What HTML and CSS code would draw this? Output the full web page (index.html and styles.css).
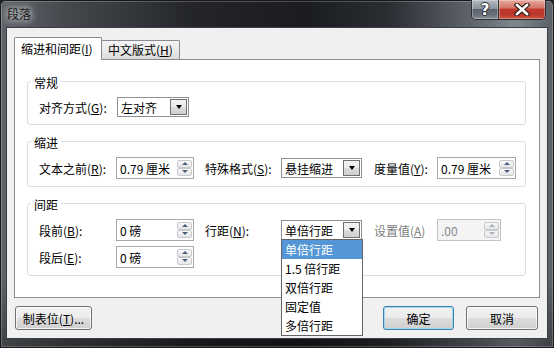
FILE: index.html
```html
<!DOCTYPE html>
<html lang="zh-CN">
<head>
    <meta charset="UTF-8">
    <title>段落</title>
    <link rel="stylesheet" href="styles.css">
</head>
<body>
    <div class="window">
        <div class="titlebar">
            <span class="title">段落</span>
            <div class="caption-btns">
                <div class="cap help">?</div>
                <div class="cap close">
                    <svg width="16" height="13" viewBox="0 0 16 13">
                        <path d="M3 2 L13 11 M13 2 L3 11" stroke="#3a2020" stroke-width="5" stroke-linecap="square"/>
                        <path d="M3 2 L13 11 M13 2 L3 11" stroke="#fff" stroke-width="2.6" stroke-linecap="square"/>
                    </svg>
                </div>
            </div>
        </div>

        <div class="client">
            <div class="tabs">
                <div class="tab active">缩进和间距(<u>I</u>)</div>
                <div class="tab">中文版式(<u>H</u>)</div>
            </div>

            <div class="panel">
                <fieldset class="group">
                    <legend>常规</legend>
                    <div class="row">
                        <span class="lbl">对齐方式(<u>G</u>):</span>
                        <div class="combo narrow"><span>左对齐</span><i class="drop"></i></div>
                    </div>
                </fieldset>

                <fieldset class="group">
                    <legend>缩进</legend>
                    <div class="row">
                        <span class="lbl">文本之前(<u>R</u>):</span>
                        <div class="spin"><span>0.79 厘米</span><div class="spinner"><i class="sb up"></i><i class="sb down"></i></div></div>
                        <span class="lbl mid">特殊格式(<u>S</u>):</span>
                        <div class="combo"><span>悬挂缩进</span><i class="drop"></i></div>
                        <span class="lbl last">度量值(<u>Y</u>):</span>
                        <div class="spin"><span>0.79 厘米</span><div class="spinner"><i class="sb up"></i><i class="sb down"></i></div></div>
                    </div>
                </fieldset>

                <fieldset class="group">
                    <legend>间距</legend>
                    <div class="row">
                        <span class="lbl">段前(<u>B</u>):</span>
                        <div class="spin"><span>0 磅</span><div class="spinner"><i class="sb up"></i><i class="sb down"></i></div></div>
                        <span class="lbl mid">行距(<u>N</u>):</span>
                        <div class="combo open"><span>单倍行距</span><i class="drop"></i>
                            <div class="list">
                                <div class="opt sel">单倍行距</div>
                                <div class="opt">1.5 倍行距</div>
                                <div class="opt">双倍行距</div>
                                <div class="opt">固定值</div>
                                <div class="opt">多倍行距</div>
                            </div>
                        </div>
                        <span class="lbl last disabled">设置值(<u>A</u>)</span>
                        <div class="spin off"><span>.00</span><div class="spinner"><i class="sb up"></i><i class="sb down"></i></div></div>

                        <span class="lbl">段后(<u>E</u>):</span>
                        <div class="spin"><span>0 磅</span><div class="spinner"><i class="sb up"></i><i class="sb down"></i></div></div>
                    </div>
                </fieldset>
            </div>

            <div class="footer">
                <button class="btn tabstops">制表位(<u>T</u>)...</button>
                <button class="btn ok">确定</button>
                <button class="btn cancel">取消</button>
            </div>
        </div>
    </div>
</body>
</html>
```

FILE: styles.css
```css
* {
    box-sizing: border-box;
}
body {
    margin: 0;
    font-family: "Noto Sans CJK SC", "Microsoft YaHei", sans-serif;
    font-size: 12px;
    color: #000;
    background: #1c1e22;
}
u {
    text-decoration: underline;
    text-underline-offset: 1px;
}

/* window frame */
.window {
    width: 554px;
    height: 348px;
    display: flex;
    flex-direction: column;
    padding: 0 7px 10px;
    border-radius: 6px 6px 0 0;
    background:
        linear-gradient(180deg, rgba(0,0,0,0) 0%, rgba(0,0,0,0) 80%, rgba(0,0,0,.35) 100%),
        linear-gradient(90deg, #60646a 0%, #45484d 12%, #232529 35%, #1a1c20 55%, #2a2d32 70%, #5f646b 85%, #80868e 93%, #5a5f66 100%);
    box-shadow: inset 0 0 0 1px #16181b, inset 0 0 0 2px rgba(255,255,255,.22);
}
.titlebar {
    height: 28px;
    display: flex;
    justify-content: space-between;
    align-items: flex-start;
}
.title {
    line-height: 28px;
    font-size: 12px;
    color: #1a1a1a;
    text-shadow: 0 0 6px rgba(255,255,255,.9), 0 0 10px rgba(255,255,255,.7);
}
.caption-btns {
    display: flex;
    margin-right: 1px;
    height: 20px;
    border: 1px solid #2c2f34;
    border-top: none;
    border-radius: 0 0 5px 5px;
    overflow: hidden;
}
.cap {
    height: 19px;
    display: flex;
    align-items: center;
    justify-content: center;
    box-shadow: inset 0 0 0 1px rgba(255,255,255,.3);
}
.help {
    width: 27px;
    font: bold 15px "DejaVu Sans", sans-serif;
    color: #fff;
    border-right: 1px solid #2c2f34;
    text-shadow: -1px 0 #2a2d33, 1px 0 #2a2d33, 0 -1px #2a2d33, 0 1px #2a2d33;
    background: linear-gradient(180deg, #b4bac2 0%, #8d949d 45%, #5c636c 50%, #6b727b 80%, #8a9098 100%);
}
.close {
    width: 46px;
    background: linear-gradient(180deg, #e8a89c 0%, #d2786a 40%, #c0392b 50%, #b8352a 75%, #d2563f 100%);
}

/* client area */
.client {
    flex: 1;
    background: #f0f0f0;
    padding: 9px 7px 8px;
    display: flex;
    flex-direction: column;
    box-shadow: 0 0 0 1px #3b3f45;
}
.tabs {
    display: flex;
    align-items: flex-end;
    height: 22px;
    position: relative;
    z-index: 1;
}
.tab {
    height: 19px;
    width: 79px;
    margin-left: -1px;
    padding-left: 6px;
    line-height: 18px;
    white-space: nowrap;
    border: 1px solid #898c95;
    border-bottom: none;
    border-radius: 2px 2px 0 0;
    background: linear-gradient(180deg, #f4f4f4 0%, #eaeaea 50%, #dadada 100%);
}
.tab.active {
    height: 23px;
    width: 88px;
    margin-left: 0;
    margin-bottom: -1px;
    line-height: 21px;
    background: #fff;
    position: relative;
    z-index: 2;
}
.panel {
    height: 239px;
    border: 1px solid #898c95;
    background: #fff;
    padding: 12px 13px 0 12px;
}

/* group boxes */
.group {
    margin: 0 0 7px;
    border: 1px solid #d5dfe5;
    border-radius: 3px;
    padding: 7px 10px 7px 11px;
    min-width: 0;
}
.group legend {
    padding: 4px 3px 0;
    margin-left: -8px;
    line-height: 14px;
}
.row {
    display: grid;
    grid-template-columns: 77px 78px 87px 81px 75px 79px;
    row-gap: 5px;
    align-items: center;
}
.lbl {
    white-space: nowrap;
}
.lbl.mid {
    padding-left: 11px;
}
.lbl.last {
    padding-left: 12px;
}
.lbl.disabled {
    color: #7c7c7c;
}

/* spin box */
.spin {
    height: 22px;
    display: flex;
    align-items: center;
    padding-left: 3px;
    border: 1px solid #a7a9ad;
    background: #fff;
    white-space: nowrap;
}
.spinner {
    margin-left: auto;
    margin-right: 1px;
    width: 15px;
    height: 16px;
    display: flex;
    flex-direction: column;
    gap: 0;
}
.sb {
    flex: 1;
    position: relative;
    border: 1px solid #c6cace;
    border-radius: 2px;
    background: linear-gradient(180deg, #f8f8f8 0%, #e6e6e6 100%);
}
.sb::after {
    content: "";
    position: absolute;
    left: 4px;
    top: 1px;
    border-left: 3px solid transparent;
    border-right: 3px solid transparent;
}
.sb.up::after {
    border-bottom: 3px solid #4a5e80;
}
.sb.down::after {
    border-top: 3px solid #4a5e80;
}
.spin.off {
    width: 64px;
    background: #f4f4f4;
    border-color: #c2c4c8;
    color: #8a8a8a;
}
.spin.off .sb::after {
    border-bottom-color: #a9b0bb;
    border-top-color: #a9b0bb;
}

/* combo box */
.combo {
    height: 20px;
    display: flex;
    align-items: center;
    padding-left: 3px;
    border: 1px solid #8f8f8f;
    background: #fff;
    position: relative;
    white-space: nowrap;
}
.combo.narrow {
    width: 72px;
    margin-left: 1px;
}
.drop {
    margin-left: auto;
    margin-right: 1px;
    width: 17px;
    height: 16px;
    border: 1px solid #707070;
    background: linear-gradient(180deg, #f2f2f2 0%, #ebebeb 50%, #dddddd 50%, #cfcfcf 100%);
    display: flex;
    align-items: center;
    justify-content: center;
}
.drop::after {
    content: "";
    border-left: 3.5px solid transparent;
    border-right: 3.5px solid transparent;
    border-top: 4px solid #000;
}
.list {
    position: absolute;
    left: -1px;
    top: 100%;
    width: 82px;
    border: 1px solid #646464;
    background: #fff;
    z-index: 5;
}
.opt {
    height: 19px;
    line-height: 19px;
    padding-left: 3px;
    white-space: nowrap;
}
.opt.sel {
    background: #5597d6;
    color: #fff;
}

/* buttons */
.footer {
    display: flex;
    margin-top: 8px;
    padding: 0 2px 0 1px;
}
.btn {
    height: 24px;
    font-family: inherit;
    font-size: 12px;
    color: #000;
    padding: 0;
    border: 1px solid #707070;
    border-radius: 3px;
    background: linear-gradient(180deg, #f2f2f2 0%, #ebebeb 50%, #dddddd 50%, #cfcfcf 100%);
    box-shadow: inset 0 0 0 1px rgba(255,255,255,.75);
}
.tabstops {
    width: 77px;
}
.ok {
    width: 71px;
    margin-left: auto;
    border-color: #3c7fb1;
    box-shadow: inset 0 0 0 1px #9fd6f2;
}
.cancel {
    width: 72px;
    margin-left: 12px;
}
```
